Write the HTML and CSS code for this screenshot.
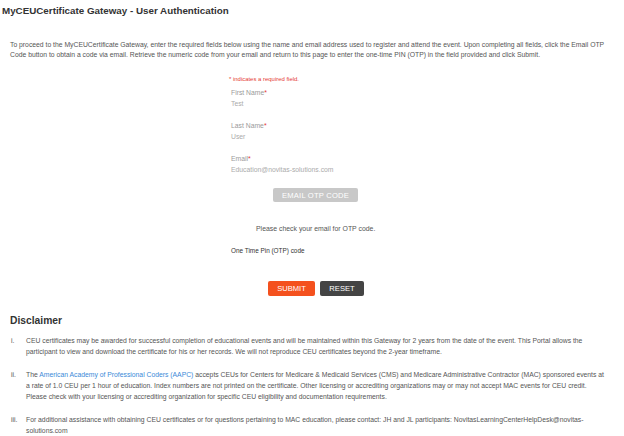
FILE: index.html
```html
<!DOCTYPE html>
<html>
<head>
<meta charset="utf-8">
<link rel="stylesheet" href="styles.css">
</head>
<body>
<div class="page">
  <h1 class="title">MyCEUCertificate Gateway - User Authentication</h1>
  <p class="intro">To proceed to the MyCEUCertificate Gateway, enter the required fields below using the name and email address used to register and attend the event. Upon completing all fields, click the Email OTP Code button to obtain a code via email. Retrieve the numeric code from your email and return to this page to enter the one-time PIN (OTP) in the field provided and click Submit.</p>

  <form class="form">
    <div class="req-note">* indicates a required field.</div>
    <div class="field">
      <div class="label">First Name<span class="star">*</span></div>
      <div class="value">Test</div>
    </div>
    <div class="field">
      <div class="label">Last Name<span class="star">*</span></div>
      <div class="value">User</div>
    </div>
    <div class="field">
      <div class="label">Email<span class="star">*</span></div>
      <div class="value">Education@novitas-solutions.com</div>
    </div>
    <div class="otp-row"><button type="button" class="btn btn-otp">EMAIL OTP CODE</button></div>
    <div class="check">Please check your email for OTP code.</div>
    <div class="pin-label">One Time Pin (OTP) code</div>
    <div class="actions">
      <button type="button" class="btn btn-submit">SUBMIT</button>
      <button type="button" class="btn btn-reset">RESET</button>
    </div>
  </form>

  <h2 class="disc-title">Disclaimer</h2>
  <ol class="disc-list">
    <li><span class="num">i.</span><span class="txt">CEU certificates may be awarded for successful completion of educational events and will be maintained within this Gateway for 2 years from the date of the event. This Portal allows the participant to view and download the certificate for his or her records. We will not reproduce CEU certificates beyond the 2-year timeframe.</span></li>
    <li><span class="num">ii.</span><span class="txt">The <a class="link" href="#">American Academy of Professional Coders (AAPC)</a> accepts CEUs for Centers for Medicare &amp; Medicaid Services (CMS) and Medicare Administrative Contractor (MAC) sponsored events at a rate of 1.0 CEU per 1 hour of education. Index numbers are not printed on the certificate. Other licensing or accrediting organizations may or may not accept MAC events for CEU credit. Please check with your licensing or accrediting organization for specific CEU eligibility and documentation requirements.</span></li>
    <li><span class="num">iii.</span><span class="txt">For additional assistance with obtaining CEU certificates or for questions pertaining to MAC education, please contact: JH and JL participants: NovitasLearningCenterHelpDesk@novitas-solutions.com</span></li>
  </ol>
</div>
</body>
</html>
```

FILE: styles.css
```css
html, body {
  margin: 0;
  padding: 0;
  background: #ffffff;
}
body {
  font-family: "Liberation Sans", Arial, sans-serif;
  color: #555555;
}
.page {
  width: 624px;
}
.title {
  margin: 0;
  padding: 5px 0 0 2px;
  font-size: 9.8px;
  line-height: 12px;
  font-weight: bold;
  color: #333333;
}
.intro {
  margin: 23px 0 0 10px;
  width: 596px;
  font-size: 6.8px;
  line-height: 10px;
  color: #555555;
}
.form {
  width: 172px;
  margin: 14px 0 0 229px;
  display: flex;
  flex-direction: column;
}
.req-note {
  font-size: 5.95px;
  line-height: 10px;
  color: #e53935;
}
.field {
  margin-top: 4px;
  margin-left: 2px;
  margin-bottom: 8px;
  font-size: 6.8px;
  line-height: 10px;
}
.label {
  color: #9a9a9a;
}
.value {
  line-height: 11px;
  color: #ababab;
}
.star {
  color: #e53935;
}
.otp-row {
  display: flex;
  justify-content: center;
  margin-top: 5px;
  padding-left: 1px;
}
.btn {
  font-family: "Liberation Sans", Arial, sans-serif;
  border: none;
  border-radius: 2px;
  color: #ffffff;
  padding: 0;
  cursor: pointer;
}
.btn-otp {
  background: #c8c8c8;
  width: 85px;
  height: 14px;
  font-size: 7.6px;
  letter-spacing: 0.2px;
}
.check {
  margin-top: 22px;
  margin-left: 27px;
  font-size: 6.9px;
  line-height: 10px;
  color: #555555;
}
.pin-label {
  margin-top: 12px;
  margin-left: 2px;
  font-size: 6.4px;
  line-height: 10px;
  color: #333333;
}
.actions {
  display: flex;
  gap: 5px;
  margin-top: 25px;
  margin-left: 39px;
}
.btn-submit {
  background: #f4511e;
  width: 47px;
  height: 15px;
  font-size: 7.6px;
}
.btn-reset {
  background: #444444;
  width: 44px;
  height: 15px;
  font-size: 7.6px;
}
.disc-title {
  margin: 19px 0 0 10px;
  font-size: 10.3px;
  line-height: 12px;
  font-weight: bold;
  color: #333333;
}
.disc-list {
  list-style: none;
  margin: 8px 0 0 0;
  padding: 0 0 0 11px;
  font-size: 6.8px;
  line-height: 11px;
  color: #555555;
}
.disc-list li {
  display: flex;
  margin-bottom: 12px;
}
.num {
  flex: 0 0 15px;
}
.txt {
  width: 578px;
}
.link {
  color: #3b8ad8;
  text-decoration: none;
}
```
